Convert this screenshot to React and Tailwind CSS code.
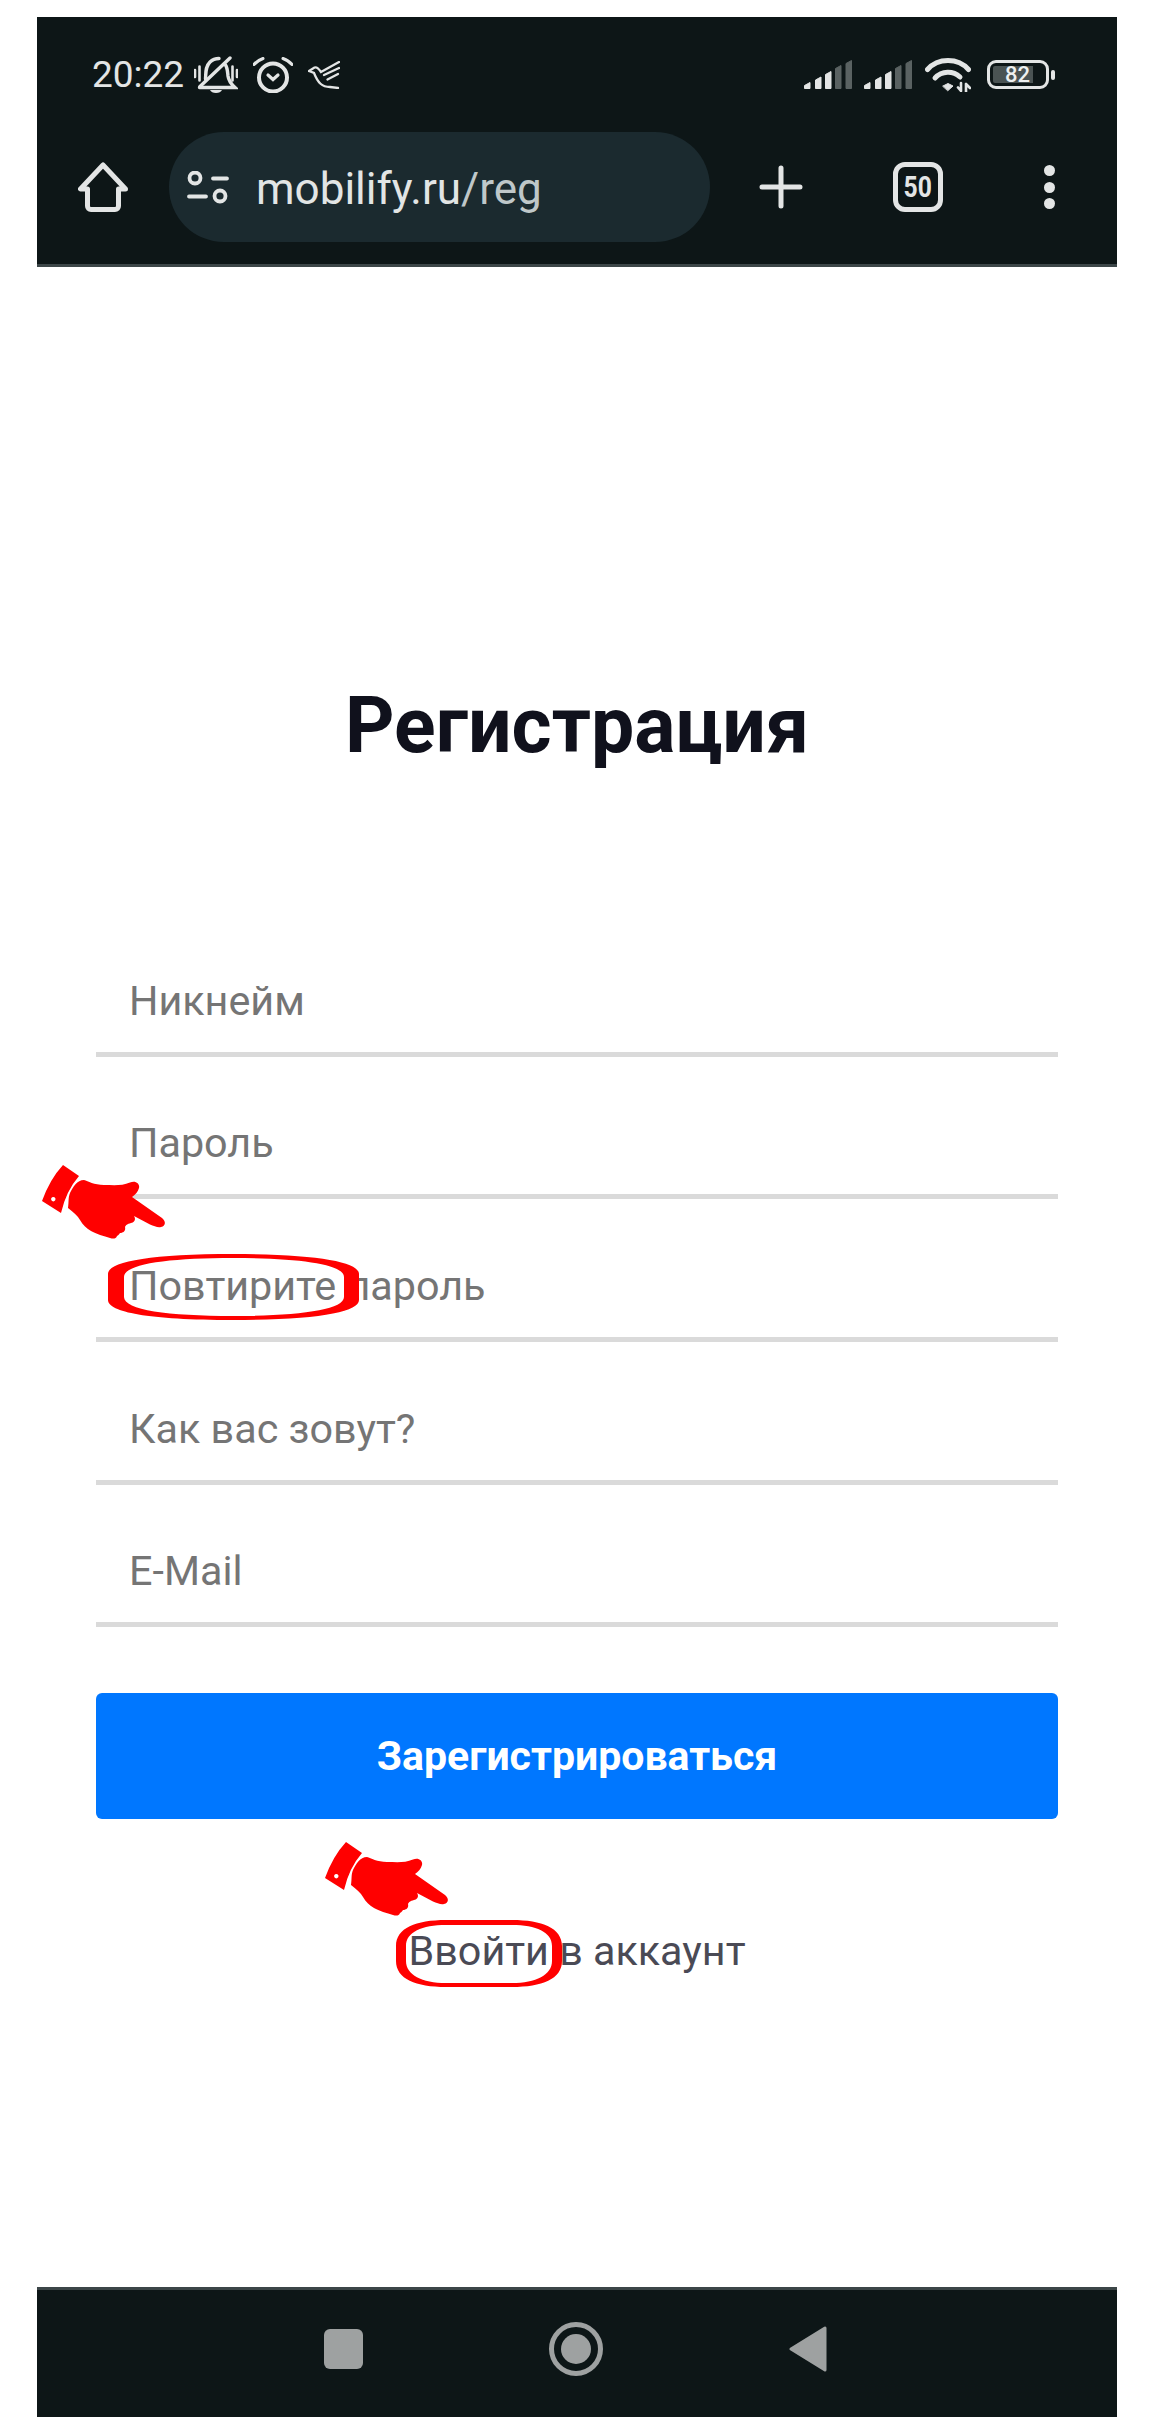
const FIELDS = ["Никнейм", "Пароль", "Повтирите пароль", "Как вас зовут?", "E-Mail"]

function Hand({ className }) {
  return (
    <svg viewBox="0 0 123 74" className={className} fill="#ff0000">
      <path
        fillRule="evenodd"
        d="M21 0L37 11Q24 26 19 48L0 36Q8 14 21 0ZM11.3 32a2.2 2.2 0 1 0 0.01 0Z"
      />
      <path d="M42 15C46 16 52 20 62 20C72 20 80 21 88 17.5C94 15 98 19 97 23C96 27 93 30 90 32L120 53C124 56 124 61 119 62C116 63 112 61 108 59.5L92 51C94 54 93 57 89 58C85 59 84 60 83 62C84 66 81 68 78 68C77 70 75 71 75 71C74 74 71 74 68 73C62 71 54 69 49 66C44 63 41 60 38 55C36 51 31 47 26 43C27 36 26 33 28 28C31 22 35 15 42 15Z" />
    </svg>
  )
}

function Ring({ className, outer, inner, viewBox }) {
  return (
    <svg viewBox={viewBox} className={className} fill="#ff0000">
      <path fillRule="evenodd" d={`${outer}${inner}`} />
    </svg>
  )
}

function Signal() {
  const bars = [
    [0, 22, "#e3e5e5"],
    [11, 16.5, "#e3e5e5"],
    [21, 11, "#e3e5e5"],
    [31, 5, "#5a6262"],
    [41.5, 0, "#5a6262"],
  ]
  return (
    <svg viewBox="0 0 48 29" className="w-[48px] h-[29px]">
      {bars.map(([x, top, color]) => (
        <path
          key={x}
          d={`M${x + 0.5} 28.5V${top + 3.5}L${x + 6} ${top + 0.5}V28.5Z`}
          fill={color}
          stroke={color}
          strokeLinejoin="round"
        />
      ))}
    </svg>
  )
}

function StatusBar() {
  return (
    <div className="h-[115px] flex items-center pl-[55px] pr-[62px] text-[#e3e5e5]">
      <span className="w-[93px] text-[37px] leading-none">20:22</span>
      <svg viewBox="0 0 44 37" className="w-[44px] h-[37px] ml-[9px]" fill="none" stroke="#e3e5e5" strokeWidth="3.4" strokeLinecap="round">
        <path d="M1 14V21M5.5 10.5V24.5M38.5 10.5V24.5M43 14V21" strokeWidth="2.6" />
        <path d="M5.5 31.5H41C36 27 34.5 24 34 20C33.5 15 33.5 12 31.5 9M11.5 23C12 17 11 11 16 6C18.5 3.5 21 2.5 25 2.5" />
        <path d="M6 30.5L36 2" />
        <path d="M16 34H28C27 36 25 37 22 37C19 37 17 36 16 34Z" fill="#e3e5e5" stroke="none" />
      </svg>
      <svg viewBox="0 0 40 36" className="w-[40px] h-[36px] ml-[15px]" fill="none" stroke="#e3e5e5" strokeLinecap="round">
        <circle cx="20" cy="20.5" r="14" strokeWidth="4" />
        <path d="M15 18L20 22.5L25 18" strokeWidth="3.2" />
        <path d="M1 7.5C3 5 6 3 10 1.5M39 7.5C37 5 34 3 30 1.5" strokeWidth="3" />
      </svg>
      <svg viewBox="0 0 32 28" className="w-[32px] h-[28px] ml-[15px]" fill="none" stroke="#e3e5e5" strokeWidth="2.3" strokeLinecap="round">
        <path d="M1 10L6.5 6.5C9 5.5 11 8 13 11L31 1M16 14L31 7M19.5 18.5L30 13M1 10L6 12C10 22 14 26 22 26L30 27" />
      </svg>

      <div className="ml-auto flex items-center">
        <Signal />
        <div className="ml-[12px]">
          <Signal />
        </div>
        <svg viewBox="0 0 46 34" className="w-[46px] h-[34px] ml-[13px]" fill="none" stroke="#e3e5e5" strokeLinecap="round">
          <path d="M2.5 11.5C13 -0.5 33 -0.5 43.5 11.5" strokeWidth="5" />
          <path d="M10 20C17 12.5 28 12.5 35 19" strokeWidth="5" />
          <path d="M18 28L23 25.5L28 28L23 32.5Z" fill="#e3e5e5" strokeWidth="1" strokeLinejoin="round" />
          <path d="M36 25V33M33 29.5L36 33M41 34V26M41 26L45 30" strokeWidth="2.6" />
        </svg>
        <div className="ml-[16px] flex items-center gap-[2px]">
          <div className="w-[62px] h-[29px] border-[3px] border-[#e3e5e5] rounded-[9px] p-[3px] flex">
            <div className="w-[40px] h-full bg-[#4a5353] rounded-l-[2px] flex items-center justify-end pr-[3px] text-[22px] leading-none font-medium text-[#eef0f0]">
              82
            </div>
          </div>
          <div className="w-[4px] h-[10px] bg-[#e3e5e5] rounded-[2px]" />
        </div>
      </div>
    </div>
  )
}

function Toolbar() {
  return (
    <div className="h-[110px] flex items-center pl-[41px]">
      <svg viewBox="0 0 50 50" className="w-[50px] h-[50px]" fill="none" stroke="#e3e5e5" strokeWidth="5" strokeLinejoin="round">
        <path d="M25 3L2.5 27H9.5V44C9.5 46 11 47.5 13 47.5H37C39 47.5 40.5 46 40.5 44V27H47.5Z" />
      </svg>
      <div className="ml-[41px] w-[541px] h-[110px] rounded-full bg-[#1b2a2f] flex items-center pl-[18px]">
        <svg viewBox="0 0 42 33" className="w-[42px] h-[33px]" fill="none" stroke="#e3e5e5" strokeWidth="3.8" strokeLinecap="round">
          <circle cx="8" cy="7" r="5.5" />
          <circle cx="33" cy="25" r="5.5" />
          <path d="M26 7.5H40M2 25.5H19" />
        </svg>
        <span className="ml-[27px] text-[44px] leading-none text-[#e2e5e5] translate-y-[2px]">
          mobilify.ru<span className="text-[#bfc7c9]">/reg</span>
        </span>
      </div>
      <svg viewBox="0 0 44 44" className="ml-[49px] w-[44px] h-[44px]" stroke="#e3e5e5" strokeWidth="5" strokeLinecap="round">
        <path d="M22 3V41M3 22H41" />
      </svg>
      <div className="ml-[90px] w-[50px] h-[50px] border-[5px] border-[#e3e5e5] rounded-[12px] flex items-center justify-center text-[#e3e5e5]">
        <span className="text-[29px] leading-none font-bold scale-x-85">50</span>
      </div>
      <div className="ml-[101px] flex flex-col gap-[5.5px]">
        <div className="w-[11px] h-[11px] rounded-full bg-[#e3e5e5]" />
        <div className="w-[11px] h-[11px] rounded-full bg-[#e3e5e5]" />
        <div className="w-[11px] h-[11px] rounded-full bg-[#e3e5e5]" />
      </div>
    </div>
  )
}

function Field({ label, marked }) {
  return (
    <div className="relative h-[142.67px] border-b-[5px] border-[#dadada] flex items-end pl-[33px] pb-[27px]">
      <span className="text-[41.3px] leading-[48px] text-[#757575]">{label}</span>
      {marked && (
        <>
          <Hand className="absolute left-[-54px] top-[-34px] w-[123px] h-[74px]" />
          <Ring
            className="absolute left-[12px] top-[55px] w-[251px] h-[66px]"
            viewBox="0 0 251 66"
            outer="M0 20C0 8 40 0 125 0C210 0 251 8 251 20V46C251 58 210 66 125 66C40 66 0 58 0 46Z"
            inner="M16 23C16 10 60 4 125 4C190 4 236 10 236 23V43C236 56 190 62 125 62C60 62 16 56 16 43Z"
          />
        </>
      )}
    </div>
  )
}

export default function App() {
  return (
    <div className="w-[1154px] h-[2434px] bg-white px-[37px] py-[17px] flex flex-col font-[Roboto,sans-serif]">
      <div className="h-[250px] shrink-0 bg-[#0d1617] border-b-[3px] border-[#3c4648]">
        <StatusBar />
        <Toolbar />
      </div>

      <div className="flex-1 px-[59px] pt-[409px]">
        <h1 className="text-[77px] leading-[100px] font-bold text-[#10111c] text-center">Регистрация</h1>

        <div className="mt-[138px]">
          {FIELDS.map((label, i) => (
            <Field key={label} label={label} marked={i === 2} />
          ))}
        </div>

        <button className="mt-[66px] w-full h-[126px] rounded-[6px] bg-[#0077ff] text-white text-[41px] font-bold">
          Зарегистрироваться
        </button>

        <div className="relative mt-[108px] text-center text-[41.3px] leading-[48px] text-[#4a4a55]">
          Ввойти в аккаунт
          <Hand className="absolute left-[229px] top-[-85px] w-[123px] h-[74px]" />
          <Ring
            className="absolute left-[300px] top-[-7px] w-[166px] h-[67px]"
            viewBox="0 0 166 67"
            outer="M0 26C0 8 20 0 50 0H116C146 0 166 8 166 26V41C166 59 146 67 116 67H50C20 67 0 59 0 41Z"
            inner="M10 26C10 12 26 5 50 5H116C140 5 156 12 156 26V41C156 55 140 63 116 63H50C26 63 10 55 10 41Z"
          />
        </div>
      </div>

      <div className="h-[130px] shrink-0 bg-[#0d1617] border-t-[3px] border-[#3c4648] flex items-center justify-center gap-[186px] pb-[9px] pr-[4px]">
        <div className="w-[39px] h-[40px] rounded-[6px] bg-[#9ea1a1]" />
        <div className="w-[54px] h-[54px] rounded-full border-[5px] border-[#9ea1a1] flex items-center justify-center">
          <div className="w-[30px] h-[30px] rounded-full bg-[#9ea1a1]" />
        </div>
        <svg viewBox="0 0 38 46" className="w-[38px] h-[46px]" fill="#9ea1a1" stroke="#9ea1a1" strokeWidth="3" strokeLinejoin="round">
          <path d="M2 23L36 2V44Z" />
        </svg>
      </div>
    </div>
  )
}
